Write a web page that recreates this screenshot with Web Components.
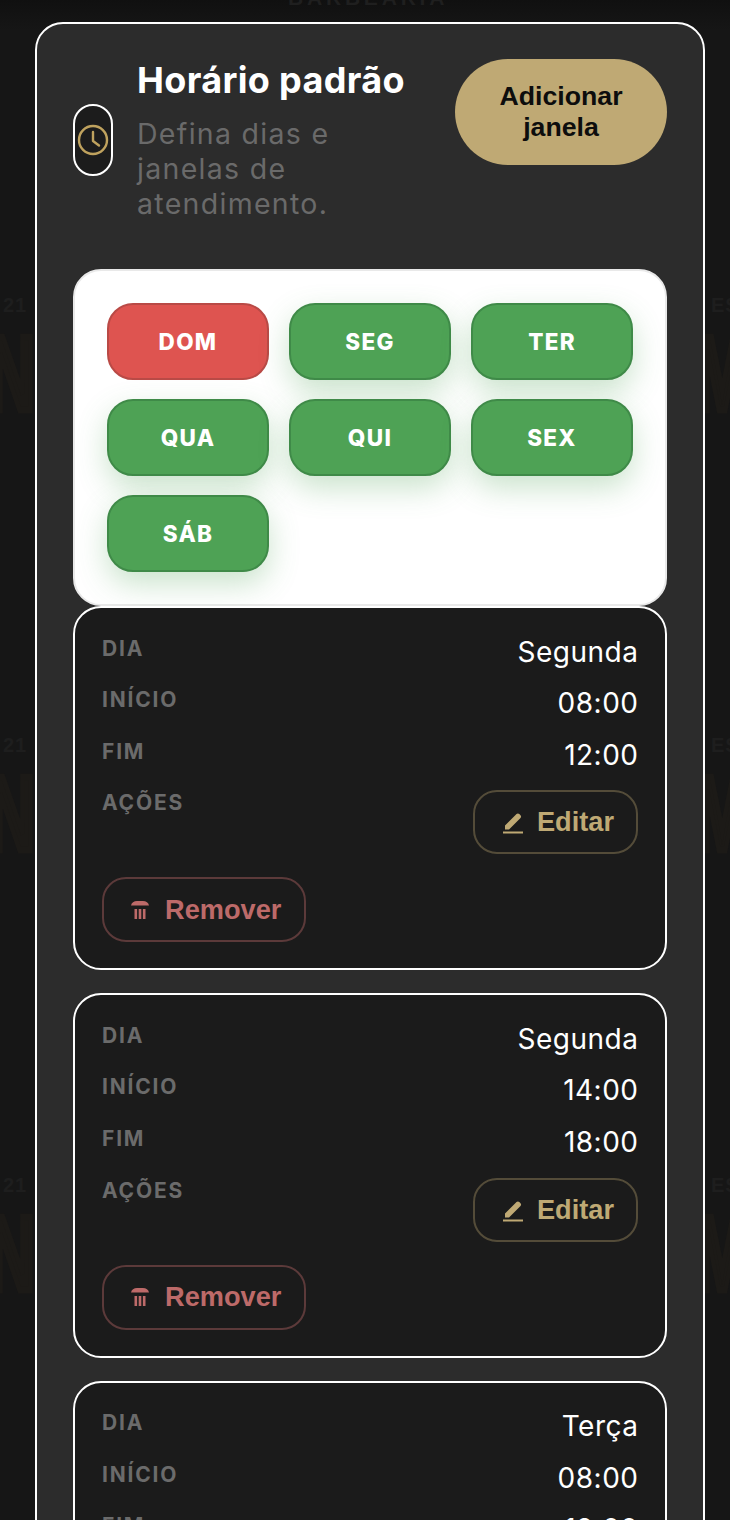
<!DOCTYPE html>
<html lang="pt-BR">
<head>
<meta charset="utf-8">
<title>Horário padrão</title>
<style>
    html, body { margin: 0; padding: 0; height: 1520px; overflow: hidden; background: #151515; }
    body { font-family: "Inter", "Liberation Sans", sans-serif; }
</style>
</head>
<body>
<poster-backdrop></poster-backdrop>
<schedule-card>
    <week-days slot="days">
        <day-pill off>DOM</day-pill>
        <day-pill>SEG</day-pill>
        <day-pill>TER</day-pill>
        <day-pill>QUA</day-pill>
        <day-pill>QUI</day-pill>
        <day-pill>SEX</day-pill>
        <day-pill>SÁB</day-pill>
    </week-days>
    <window-row day="Segunda" start="08:00" end="12:00"></window-row>
    <window-row day="Segunda" start="14:00" end="18:00"></window-row>
    <window-row day="Terça" start="08:00" end="12:00"></window-row>
</schedule-card>

<script>
class PosterBackdrop extends HTMLElement {
    connectedCallback() {
        this.attachShadow({ mode: 'open' });
        let tiles = '';
        // the poster repeats about every 440px down the page
        [0, 440, 880].forEach(y => {
            tiles += `
                <span class="small" style="left:3px;top:${y + 295}px">21</span>
                <span class="small" style="left:711px;top:${y + 295}px">ES</span>
                <span class="big" style="left:-12px;top:${y + 321}px">N</span>
                <span class="big" style="left:695px;top:${y + 321}px">MA</span>`;
        });
        this.shadowRoot.innerHTML = `
            <style>
                :host { position: absolute; inset: 0; overflow: hidden; display: block;
                    background: linear-gradient(#101010, #161616 30px); }
                span { position: absolute; white-space: nowrap; font-family: "Liberation Sans", sans-serif; font-weight: 700; line-height: 1; }
                .small { font-size: 20px; color: #1e1e1e; letter-spacing: 1px; }
                .big { font-size: 105px; color: #1c1a17; -webkit-text-stroke: 7px #1c1a17; transform-origin: left top; transform: scaleX(.62); }
                .top { left: 288px; top: -13px; font-size: 21px; letter-spacing: 3.800px; color: #1f1f1f; }
            </style>
            <span class="top">BARBEARIA</span>
            ${tiles}
        `;
    }
}
customElements.define('poster-backdrop', PosterBackdrop);

class ClockBadge extends HTMLElement {
    connectedCallback() {
        this.attachShadow({ mode: 'open' });
        this.shadowRoot.innerHTML = `
            <style>
                :host { flex: none; box-sizing: border-box; width: 40px; height: 72px; display: flex; align-items: center; justify-content: center;
                    border: 2px solid #fff; border-radius: 20px; background: #1c1c1c; }
                svg { display: block; }
            </style>
            <svg width="32" height="32" viewBox="0 0 32 32" fill="none" stroke="#bfa25e" stroke-width="2.400" stroke-linecap="round" stroke-linejoin="round">
                <circle cx="16" cy="16" r="14"/>
                <path d="M16 8v9l6 4.500"/>
            </svg>
        `;
    }
}
customElements.define('clock-badge', ClockBadge);

class DayPill extends HTMLElement {
    connectedCallback() {
        this.attachShadow({ mode: 'open' });
        this.shadowRoot.innerHTML = `
            <style>
                :host { box-sizing: border-box; height: 77px; display: flex; align-items: center; justify-content: center;
                    border: 2px solid #3f8a48; border-radius: 26px; background: #4ea255; color: #fff;
                    font: 800 22.500px "Inter", "Liberation Sans", sans-serif; letter-spacing: 1.300px;
                    box-shadow: 0 12px 30px rgba(78, 162, 85, .3); }
                :host([off]) { background: #de5450; border-color: #b94a46; box-shadow: none; }
            </style>
            <slot></slot>
        `;
    }
}
customElements.define('day-pill', DayPill);

class WeekDays extends HTMLElement {
    connectedCallback() {
        this.attachShadow({ mode: 'open' });
        this.shadowRoot.innerHTML = `
            <style>
                :host { display: grid; box-sizing: border-box; grid-template-columns: repeat(3, 1fr); gap: 19px 20px; padding: 32px;
                    background: #fff; border: 2px solid #e9e9e9; border-radius: 28px; }
            </style>
            <slot></slot>
        `;
    }
}
customElements.define('week-days', WeekDays);

class ActionButton extends HTMLElement {
    connectedCallback() {
        this.attachShadow({ mode: 'open' });
        const danger = this.hasAttribute('danger');
        const icon = danger
            ? `<svg width="20" height="20" viewBox="0 0 20 20" fill="#bd6a69">
                   <path d="M7 1h6c3 0 5.500 1.500 6 4.500H1C1.500 2.500 4 1 7 1z"/>
                   <path d="M4.500 9h2.600v10H4.500zM8.700 9h2.600v10H8.700zM12.900 9h2.600v10h-2.600z"/>
               </svg>`
            : `<svg width="22" height="24" viewBox="0 0 22 24" fill="#bfa974">
                   <path d="M3 15.500 14.500 4c.8-.8 2-.8 2.800 0l1.200 1.200c.8.800.8 2 0 2.800L7 19.500H3z"/>
                   <rect x="1" y="21.500" width="20" height="2"/>
               </svg>`;
        this.shadowRoot.innerHTML = `
            <style>
                :host { display: inline-flex; box-sizing: border-box; align-items: center; height: 64px; gap: 13px; padding: 0 22px 0 27px;
                    border: 2px solid rgba(191, 169, 116, .35); border-radius: 24px; color: #bfa974;
                    font: 700 27.200px "Liberation Sans", sans-serif; }
                :host([danger]) { border-color: rgba(189, 106, 105, .4); color: #bd6a69; height: 65px; gap: 15px; padding: 0 23px 0 26px; }
                svg { display: block; flex: none; }
            </style>
            ${icon}
            <slot></slot>
        `;
    }
}
customElements.define('action-button', ActionButton);

class WindowRow extends HTMLElement {
    connectedCallback() {
        this.attachShadow({ mode: 'open' });
        const day = this.getAttribute('day');
        const start = this.getAttribute('start');
        const end = this.getAttribute('end');
        this.shadowRoot.innerHTML = `
            <style>
                :host { display: flex; flex-direction: column; box-sizing: border-box; height: 364.300px; padding: 27.500px 27px 26px;
                    background: #1b1b1b; border: 2px solid #fff; border-radius: 28px; color: #fff;
                    font-family: "Inter", "Liberation Sans", sans-serif; }
                .line { display: flex; justify-content: space-between; align-items: flex-start; margin-bottom: 18px; }
                .label { font-size: 21px; line-height: 26px; font-weight: 700; letter-spacing: 1.800px; color: #6b6b6b; }
                .value { font-size: 28px; line-height: 33.600px; letter-spacing: .5px; margin-right: -.5px; }
                .line.actions { margin-bottom: 23px; }
            </style>
            <div class="line"><span class="label">DIA</span><span class="value">${day}</span></div>
            <div class="line"><span class="label">INÍCIO</span><span class="value">${start}</span></div>
            <div class="line"><span class="label">FIM</span><span class="value">${end}</span></div>
            <div class="line actions"><span class="label">AÇÕES</span><action-button>Editar</action-button></div>
            <div><action-button danger>Remover</action-button></div>
        `;
    }
}
customElements.define('window-row', WindowRow);

class ScheduleCard extends HTMLElement {
    connectedCallback() {
        this.attachShadow({ mode: 'open' });
        this.shadowRoot.innerHTML = `
            <style>
                :host { position: relative; display: block; box-sizing: border-box; width: 670px; margin: 22px 0 0 35px; padding: 35px 36px 40px;
                    background: #2c2c2c; border: 2px solid #fff; border-radius: 28px; }
                header { display: flex; align-items: center; gap: 24px; margin-bottom: 48px; }
                .text { flex: 1; min-width: 0; }
                h2 { margin: 0 0 15px; font: 700 36px/42px "Inter", "Liberation Sans", sans-serif; letter-spacing: .35px; color: #fff; white-space: nowrap; }
                p { margin: 0; width: 270px; font: 400 28.500px/35px "Inter", "Liberation Sans", sans-serif; letter-spacing: 1.300px; color: #6a6a6a; }
                button { flex: none; align-self: flex-start; width: 212px; height: 106px; border: 0; border-radius: 53px; background: #bfa974; color: #0d0d0d;
                    font: 700 26.700px/31px "Liberation Sans", sans-serif; padding: 0 30px; }
                .stack { display: flex; flex-direction: column; gap: 23px; }
                .stack ::slotted(week-days) { margin-bottom: -23px; }
            </style>
            <header>
                <clock-badge></clock-badge>
                <div class="text">
                    <h2>Horário padrão</h2>
                    <p>Defina dias e janelas de atendimento.</p>
                </div>
                <button>Adicionar janela</button>
            </header>
            <div class="stack">
                <slot name="days"></slot>
                <slot></slot>
            </div>
        `;
    }
}
customElements.define('schedule-card', ScheduleCard);
</script>
</body>
</html>
